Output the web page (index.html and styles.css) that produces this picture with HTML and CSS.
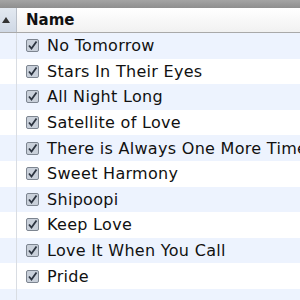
FILE: index.html
```html
<!DOCTYPE html>
<html>
<head>
<meta charset="utf-8">
<link rel="stylesheet" href="styles.css">
</head>
<body>
<div class="top"></div>
<div class="header">
  <div class="hcell sort"><span class="tri"></span></div>
  <div class="hcell name">Name</div>
</div>
<div class="list">
  <div class="row"><div class="idx"></div><div class="cell"><svg class="cb" viewBox="0 0 13 13"><rect x="0.5" y="0.5" width="12" height="12" rx="1.5" fill="#c9d0da" stroke="#7d8590"/><path d="M3 6.5 L5.5 9.5 L10.5 2.5" fill="none" stroke="#2c3440" stroke-width="1.8"/></svg><span>No Tomorrow</span></div></div>
  <div class="row"><div class="idx"></div><div class="cell"><svg class="cb" viewBox="0 0 13 13"><rect x="0.5" y="0.5" width="12" height="12" rx="1.5" fill="#c9d0da" stroke="#7d8590"/><path d="M3 6.5 L5.5 9.5 L10.5 2.5" fill="none" stroke="#2c3440" stroke-width="1.8"/></svg><span>Stars In Their Eyes</span></div></div>
  <div class="row"><div class="idx"></div><div class="cell"><svg class="cb" viewBox="0 0 13 13"><rect x="0.5" y="0.5" width="12" height="12" rx="1.5" fill="#c9d0da" stroke="#7d8590"/><path d="M3 6.5 L5.5 9.5 L10.5 2.5" fill="none" stroke="#2c3440" stroke-width="1.8"/></svg><span>All Night Long</span></div></div>
  <div class="row"><div class="idx"></div><div class="cell"><svg class="cb" viewBox="0 0 13 13"><rect x="0.5" y="0.5" width="12" height="12" rx="1.5" fill="#c9d0da" stroke="#7d8590"/><path d="M3 6.5 L5.5 9.5 L10.5 2.5" fill="none" stroke="#2c3440" stroke-width="1.8"/></svg><span>Satellite of Love</span></div></div>
  <div class="row"><div class="idx"></div><div class="cell"><svg class="cb" viewBox="0 0 13 13"><rect x="0.5" y="0.5" width="12" height="12" rx="1.5" fill="#c9d0da" stroke="#7d8590"/><path d="M3 6.5 L5.5 9.5 L10.5 2.5" fill="none" stroke="#2c3440" stroke-width="1.8"/></svg><span>There is Always One More Time</span></div></div>
  <div class="row"><div class="idx"></div><div class="cell"><svg class="cb" viewBox="0 0 13 13"><rect x="0.5" y="0.5" width="12" height="12" rx="1.5" fill="#c9d0da" stroke="#7d8590"/><path d="M3 6.5 L5.5 9.5 L10.5 2.5" fill="none" stroke="#2c3440" stroke-width="1.8"/></svg><span>Sweet Harmony</span></div></div>
  <div class="row"><div class="idx"></div><div class="cell"><svg class="cb" viewBox="0 0 13 13"><rect x="0.5" y="0.5" width="12" height="12" rx="1.5" fill="#c9d0da" stroke="#7d8590"/><path d="M3 6.5 L5.5 9.5 L10.5 2.5" fill="none" stroke="#2c3440" stroke-width="1.8"/></svg><span>Shipoopi</span></div></div>
  <div class="row"><div class="idx"></div><div class="cell"><svg class="cb" viewBox="0 0 13 13"><rect x="0.5" y="0.5" width="12" height="12" rx="1.5" fill="#c9d0da" stroke="#7d8590"/><path d="M3 6.5 L5.5 9.5 L10.5 2.5" fill="none" stroke="#2c3440" stroke-width="1.8"/></svg><span>Keep Love</span></div></div>
  <div class="row"><div class="idx"></div><div class="cell"><svg class="cb" viewBox="0 0 13 13"><rect x="0.5" y="0.5" width="12" height="12" rx="1.5" fill="#c9d0da" stroke="#7d8590"/><path d="M3 6.5 L5.5 9.5 L10.5 2.5" fill="none" stroke="#2c3440" stroke-width="1.8"/></svg><span>Love It When You Call</span></div></div>
  <div class="row"><div class="idx"></div><div class="cell"><svg class="cb" viewBox="0 0 13 13"><rect x="0.5" y="0.5" width="12" height="12" rx="1.5" fill="#c9d0da" stroke="#7d8590"/><path d="M3 6.5 L5.5 9.5 L10.5 2.5" fill="none" stroke="#2c3440" stroke-width="1.8"/></svg><span>Pride</span></div></div>
  <div class="row"><div class="idx"></div><div class="cell"></div></div>
</div>
</body>
</html>
```
FILE: styles.css
```css
html, body {
  margin: 0;
  padding: 0;
  width: 300px;
  height: 300px;
  overflow: hidden;
  background: #fff;
  font-family: "DejaVu Sans", Verdana, sans-serif;
  color: #111;
}
.top {
  height: 8px;
  background: linear-gradient(#a4a4a4, #8e8e8e);
}
.header {
  display: grid;
  grid-template-columns: 17px 1fr;
  height: 24px;
  border-bottom: 1px solid #a9a9a9;
  background: linear-gradient(#ffffff, #f1f1f1);
}
.hcell {
  display: flex;
  align-items: center;
}
.sort {
  background: linear-gradient(#e3e9f1, #cfd8e5);
  border-right: 1px solid #b9bfc8;
  justify-content: center;
}
.tri {
  width: 0;
  height: 0;
  border-left: 4px solid transparent;
  border-right: 4px solid transparent;
  border-bottom: 6px solid #333;
  margin-right: 4px;
}
.name {
  padding-left: 9px;
  font-weight: bold;
  font-size: 15px;
}
.list {
  display: flex;
  flex-direction: column;
}
.row {
  display: grid;
  grid-template-columns: 17px 1fr;
  height: 25.6px;
  flex: none;
}
.row:nth-child(odd) {
  background: #edf3fe;
}
.idx {
  border-right: 1px solid #d9dde3;
}
.cell {
  display: flex;
  align-items: center;
  padding-left: 9px;
  white-space: nowrap;
  overflow: hidden;
  font-size: 16px;
  letter-spacing: 0.3px;
}
.cb {
  width: 13px;
  height: 13px;
  margin-right: 8px;
  flex: none;
}
```
